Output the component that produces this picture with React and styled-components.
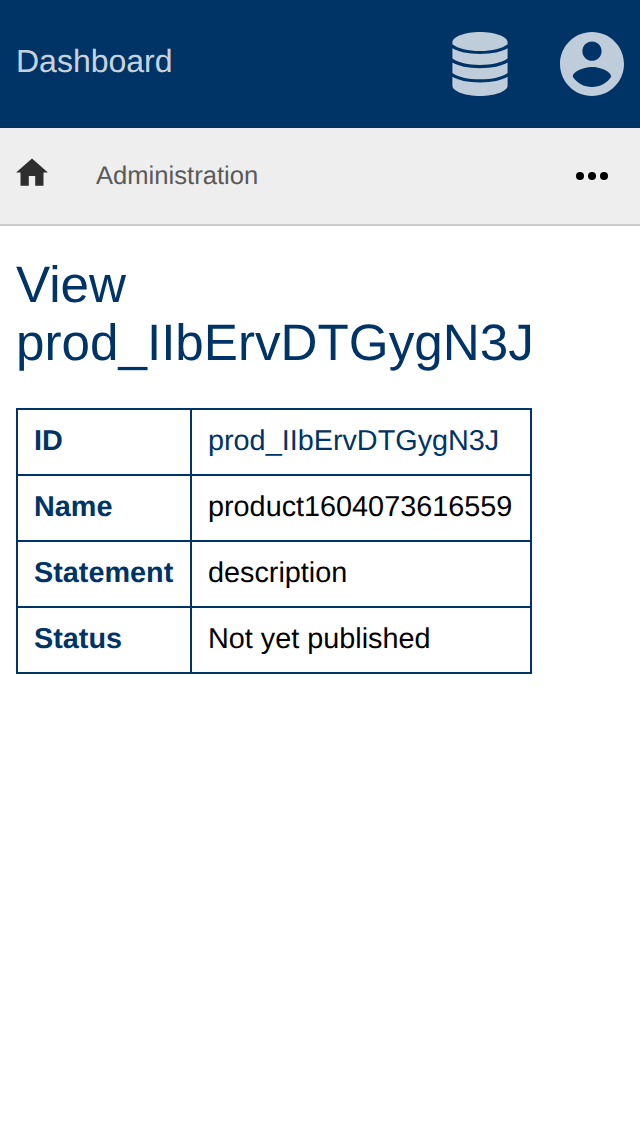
import React from "react";
import styled, { createGlobalStyle } from "styled-components";

const navy = "#003366";

const GlobalStyle = createGlobalStyle`
  * { box-sizing: border-box; }
  body {
    margin: 0;
    background: #fff;
    color: #000;
    font-family: "Liberation Sans", Arial, sans-serif;
    font-size: 28.8px;
    text-rendering: geometricPrecision;
  }
`;

const Page = styled.div`
  min-height: 100vh;
`;

const Header = styled.header`
  display: flex;
  align-items: center;
  justify-content: space-between;
  height: 128px;
  padding: 0 16px;
  background: ${navy};
  color: rgba(255, 255, 255, 0.8);
`;

const Brand = styled.a`
  padding-bottom: 6px;
  font-size: 32px;
  line-height: 36px;
`;

const HeaderActions = styled.div`
  display: flex;
  align-items: center;
  gap: 52px;
`;

const HeaderIcon = styled.svg`
  display: block;
  width: ${(p) => p.$width}px;
  height: 64px;
  fill: #bfccd9;
`;

const Breadcrumbs = styled.nav`
  display: flex;
  align-items: center;
  height: 98px;
  padding: 0 32px 0 16px;
  background: #eee;
  border-bottom: 2px solid #ccc;
`;

const HomeIcon = styled.svg`
  display: block;
  width: 32px;
  height: 28px;
  margin: 0 48px 8px 0;
  fill: #2e2e2e;
`;

const Crumb = styled.a`
  flex: 1;
  font-size: 25.6px;
  line-height: 30px;
  color: #595959;
`;

const MoreIcon = styled.svg`
  display: block;
  width: 32px;
  height: 8px;
`;

const Main = styled.main`
  padding: 30px 16px;
`;

const Title = styled.h1`
  margin: 0 0 36px;
  font-size: 51.2px;
  font-weight: 400;
  line-height: 58px;
  color: ${navy};
`;

const Details = styled.table`
  border-collapse: collapse;
  border: 2px solid ${navy};
  line-height: 32px;
`;

const Label = styled.th`
  width: 174px;
  height: 66px;
  padding: 15px 16px 17px;
  border: 2px solid ${navy};
  color: ${navy};
  text-align: left;
`;

const Value = styled.td`
  width: 340px;
  padding: 15px 16px 17px;
  border: 2px solid ${navy};
  color: ${(p) => (p.$link ? navy : "#000")};
`;

const rows = [
  { label: "ID", value: "prod_IIbErvDTGygN3J", link: true },
  { label: "Name", value: "product1604073616559" },
  { label: "Statement", value: "description" },
  { label: "Status", value: "Not yet published" },
];

export default function App() {
  return (
    <Page>
      <GlobalStyle />
      <Header>
        <Brand>Dashboard</Brand>
        <HeaderActions>
          <HeaderIcon $width={56} viewBox="0 0 56 64">
            <path d="M28 0C43 0 55.6 4.8 55.6 10.2V12.2C50 16.6 40 19 28 19S6 16.6 .4 12.2V10.2C.4 4.8 13 0 28 0z" />
            <path d="M.4 16.3C6 19.8 16 22 28 22S50 19.8 55.6 16.3V26.6C50 30.8 40 33 28 33S6 30.8 .4 26.6z" />
            <path d="M.4 30.5C6 34 16 36.2 28 36.2S50 34 55.6 30.5V40.9C50 45.1 40 47.3 28 47.3S6 45.1 .4 40.9z" />
            <path d="M.4 44.8C6 48.3 16 50.5 28 50.5S50 48.3 55.6 44.8V53.8C55.6 59.2 43 64 28 64S.4 59.2 .4 53.8z" />
          </HeaderIcon>
          <HeaderIcon $width={64} viewBox="2 2 20 20">
            <path d="M12 2C6.48 2 2 6.48 2 12s4.48 10 10 10 10-4.48 10-10S17.52 2 12 2zm0 3c1.66 0 3 1.34 3 3s-1.34 3-3 3-3-1.34-3-3 1.34-3 3-3zm0 14.2c-2.5 0-4.71-1.28-6-3.22.03-1.99 4-3.08 6-3.08 1.99 0 5.97 1.09 6 3.08-1.29 1.94-3.5 3.22-6 3.22z" />
          </HeaderIcon>
        </HeaderActions>
      </Header>
      <Breadcrumbs>
        <HomeIcon viewBox="0 0 32 28">
          <path d="M16 .4L31.9 14.6H27.5V27.7H19.2V18H12.8V27.7H4.5V14.6H.1z" />
        </HomeIcon>
        <Crumb>Administration</Crumb>
        <MoreIcon viewBox="0 0 32 8">
          <circle cx="4" cy="4" r="4" />
          <circle cx="16" cy="4" r="4" />
          <circle cx="28" cy="4" r="4" />
        </MoreIcon>
      </Breadcrumbs>
      <Main>
        <Title>
          View
          <br />
          prod_IIbErvDTGygN3J
        </Title>
        <Details>
          <tbody>
            {rows.map((row) => (
              <tr key={row.label}>
                <Label>{row.label}</Label>
                <Value $link={row.link}>{row.value}</Value>
              </tr>
            ))}
          </tbody>
        </Details>
      </Main>
    </Page>
  );
}
